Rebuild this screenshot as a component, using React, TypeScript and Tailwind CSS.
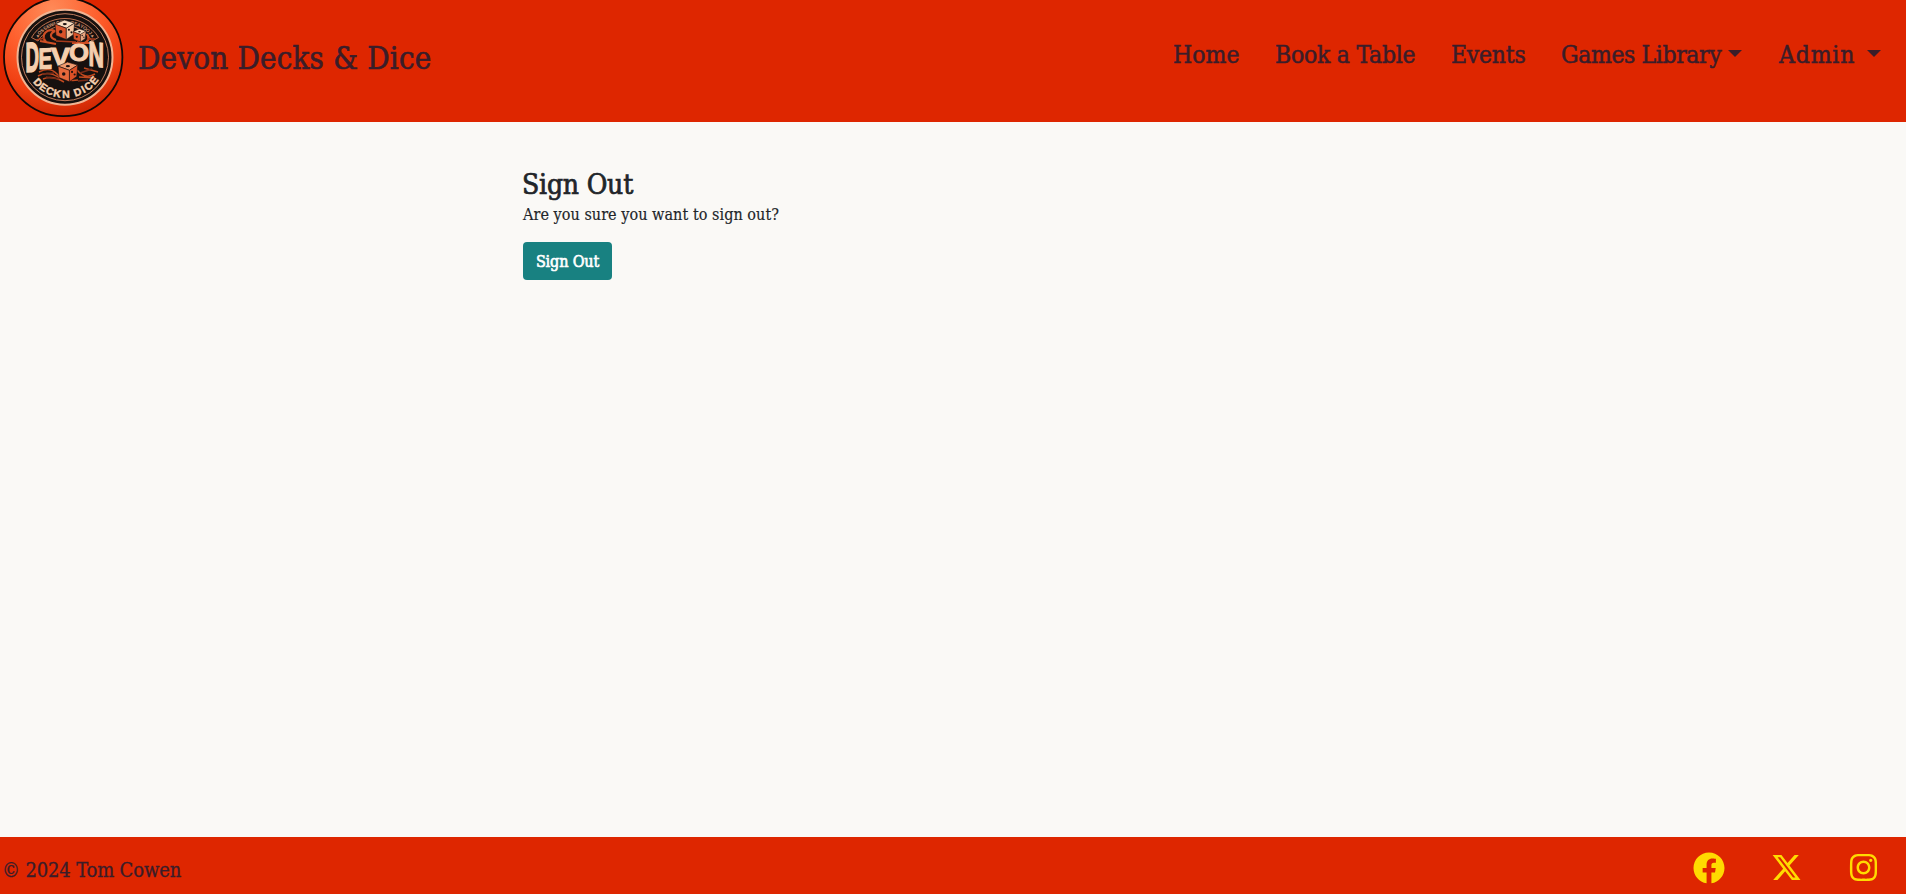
import React from "react";
import { FaFacebook } from "react-icons/fa";
import { FaInstagram, FaXTwitter } from "react-icons/fa6";

const cream = "#f6cfae";

type Glyph = [string, number];

const motto: Glyph[] = "▲OSSEWACEJ•OEAYOOJ▲".split("").map((c, i, all) => [c, (i / (all.length - 1) - 0.5) * 104]);

const banner: Glyph[] = [
  ["D", 47], ["E", 35.5], ["C", 24], ["K", 12], ["N", -1.5],
  ["D", -20], ["I", -29.5], ["C", -39], ["E", -51],
];

function Die({ x, y, s, front, top, side }: { x: number; y: number; s: number; front: string; top: string; side: string }) {
  return (
    <g transform={`translate(${x} ${y}) scale(${s})`} stroke="#1a1010" strokeWidth="0.6" strokeLinejoin="round">
      <path d="M0 4 L9 0 L19 3 L11 8Z" fill={top} />
      <path d="M0 4 L11 8 L11 19 L1 15Z" fill={front} />
      <path d="M11 8 L19 3 L18 14 L11 19Z" fill={side} />
      <g fill="#1a1010" stroke="none">
        <ellipse cx="9.5" cy="4" rx="2" ry="1.1" />
        <circle cx="5.5" cy="11.5" r="1.7" />
        <circle cx="13.5" cy="9.5" r="1" />
        <circle cx="16" cy="12" r="1" />
      </g>
    </g>
  );
}

function ArcText({ glyphs, offset, size, fill }: { glyphs: Glyph[]; offset: number; size: number; fill: string }) {
  return (
    <g fontFamily="Liberation Sans" fontWeight="bold" fontSize={size} fill={fill} textAnchor="middle">
      {glyphs.map(([c, angle], i) => (
        <text key={i} transform={`translate(65 57.2) rotate(${angle}) translate(0 ${offset})`}>{c}</text>
      ))}
    </g>
  );
}

function Letter({ c, x, y, w, h, skew = 0 }: { c: string; x: number; y: number; w: number; h: number; skew?: number }) {
  return (
    <text
      transform={`translate(${x} ${y}) skewY(${skew}) scale(${w / 14} ${h / 14.4})`}
      fontSize="20"
      textLength="14"
      lengthAdjust="spacingAndGlyphs"
    >
      {c}
    </text>
  );
}

function Logo() {
  return (
    <svg className="block h-[122px] w-[126px] shrink-0" viewBox="0 0 126 122" aria-label="Devon Decks and Dice logo">
      <defs>
        <radialGradient id="ring" cx="0.4" cy="0.1" r="0.95">
          <stop offset="0" stopColor="#ff8a58" />
          <stop offset="0.45" stopColor="#fe5c2a" />
          <stop offset="0.75" stopColor="#ee3d10" />
          <stop offset="1" stopColor="#c62200" />
        </radialGradient>
      </defs>
      <circle cx="63.2" cy="57" r="59.2" fill="url(#ring)" stroke="#120806" strokeWidth="1.8" />
      <circle cx="65" cy="57.2" r="47.5" fill="#17110f" stroke="#f0b493" strokeWidth="2" />
      <circle cx="65" cy="57.2" r="43.5" fill="none" stroke="#d58a68" strokeWidth="0.9" />
      <path d="M31.5 37.5 A39 39 0 0 1 98.5 37.5 M38 41 A31.5 31.5 0 0 1 92 41 M31.5 37.5 L38 41 M98.5 37.5 L92 41" fill="none" stroke="#cf7a56" strokeWidth="0.9" />
      <ArcText glyphs={motto} offset={-33.5} size={4.8} fill="#cf9474" />
      <path d="M46 42 C40 35 47 28 55 31 C49 34 50 38 56 40 M77 42 C85 46 91 40 87 34 M40 41 L56 44 M72 43 L93 43" fill="none" stroke="#cf4e24" strokeWidth="2.2" />
      <path d="M36 40 L45 38 M87 39 L95 39 M56 41 L76 42" stroke="#a63a1b" strokeWidth="1.5" />
      <Die x={55} y={20} s={1.03} front="#d9532a" top="#f8dcc0" side="#f3c49f" />
      <Die x={73} y={29} s={0.68} front="#d9532a" top="#f8dcc0" side="#e9a781" />
      <path d="M39 72 Q50 66 57 74 T78 80 M38 76 Q48 70 60 78 M43 79 Q52 75 64 82 M77 70 Q85 80 95 74 M79 77 L95 78 M84 68 L98 72" fill="none" stroke="#c2491f" strokeWidth="1.5" />
      <path d="M42 74 L54 73 M46 77 L59 79 M80 73 L92 69 M78 81 L88 80" stroke="#762b18" strokeWidth="1.7" />
      <g fill={cream} stroke={cream} strokeWidth="0.8" fontFamily="Liberation Sans" fontWeight="bold">
        <Letter c="D" x={25.5} y={72} w={13.5} h={30} skew={-4} />
        <Letter c="E" x={38.5} y={69} w={13.5} h={21} skew={-3} />
        <Letter c="V" x={51} y={66} w={19} h={19} />
        <Letter c="O" x={69} y={60.5} w={20} h={17} />
        <Letter c="N" x={88.5} y={65.5} w={15.5} h={25} skew={7} />
      </g>
      <Die x={58} y={62} s={1.04} front="#e5683b" top="#f09a6e" side="#dc5026" />
      <g stroke={cream} strokeWidth="0.4">
        <ArcText glyphs={banner} offset={40.7} size={10.5} fill={cream} />
      </g>
    </svg>
  );
}

function Caret() {
  return <span className="mt-[-3px] h-0 w-0 border-x-[7px] border-t-[7px] border-x-transparent border-t-[#3a1d29]" />;
}

export default function App() {
  return (
    <div className="flex h-[894px] flex-col bg-[#faf9f6] font-['DejaVu_Serif_Condensed','DejaVu_Serif',serif] [font-stretch:condensed] text-[#212529]">
      <header className="flex h-[122px] shrink-0 justify-between bg-[#de2600] text-[#3a1d29]">
        <a href="#" className="flex">
          <Logo />
          <span className="ml-[12px] pt-[35px] text-[31px] leading-[47px] tracking-[0.2px] whitespace-nowrap [-webkit-text-stroke:0.6px]">Devon Decks &amp; Dice</span>
        </a>
        <nav className="flex h-[109px] items-center pr-[25px] text-[24.5px] leading-[36px] tracking-[-0.25px] whitespace-nowrap [-webkit-text-stroke:0.5px]">
          <a href="#" className="w-[102px] tracking-[0px]">Home</a>
          <a href="#" className="w-[176px]">Book a Table</a>
          <a href="#" className="w-[110px]">Events</a>
          <a href="#" className="flex w-[218px] items-center"><span className="w-[167px] tracking-[-0.4px]">Games Library</span><Caret /></a>
          <a href="#" className="flex w-[102px] items-center"><span className="w-[88px] tracking-[0.8px]">Admin</span><Caret /></a>
        </nav>
      </header>
      <main className="flex grow flex-col items-start pt-[43px] pl-[522px]">
        <h1 className="text-[28px] leading-[40px] tracking-[-0.2px] [-webkit-text-stroke:0.7px]">Sign Out</h1>
        <p className="mt-[-2px] pl-px text-[16px] leading-[24px] tracking-[0.05px] [-webkit-text-stroke:0.15px]">Are you sure you want to sign out?</p>
        <button className="mt-[15px] ml-px h-[38px] w-[89px] rounded-[4px] bg-[#188181] pt-[2px] text-[16px] tracking-[-0.15px] whitespace-nowrap text-white [-webkit-text-stroke:0.6px]">Sign Out</button>
      </main>
      <footer className="flex h-[57px] shrink-0 justify-between bg-[#de2600] text-[#3a1d29]">
        <p className="pt-[17px] pl-[2px] text-[20px] leading-[32px] tracking-[-0.15px] [-webkit-text-stroke:0.3px]">© 2024 Tom Cowen</p>
        <div className="flex gap-[46px] pt-[15px] pr-[27px] text-[31px] text-[#ffdb00]">
          <FaFacebook className="size-8" /><FaXTwitter /><FaInstagram />
        </div>
      </footer>
    </div>
  );
}
